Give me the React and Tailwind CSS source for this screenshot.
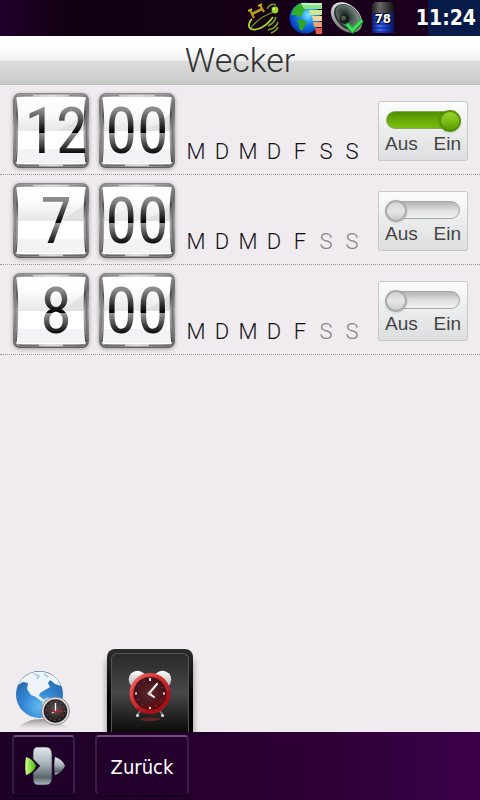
import { useState } from 'react';

const DAYS = ['M', 'D', 'M', 'D', 'F', 'S', 'S'];
const DAY_NAMES = ['Montag', 'Dienstag', 'Mittwoch', 'Donnerstag', 'Freitag', 'Samstag', 'Sonntag'];

const INITIAL_ALARMS = [
    { id: 1, hour: '12', minute: '00', days: [1, 1, 1, 1, 1, 1, 1], enabled: true },
    { id: 2, hour: '7', minute: '00', days: [1, 1, 1, 1, 1, 0, 0], enabled: false },
    { id: 3, hour: '8', minute: '00', days: [1, 1, 1, 1, 1, 0, 0], enabled: false },
];

function SatelliteIcon() {
    return (
        <svg viewBox="0 0 32 32" className="size-8" aria-hidden="true" fill="none">
            <g stroke="#b89a18" strokeWidth="2.2">
                <path d="M2 8 L6 16 M12 3 L16 10" />
                <path d="M4 12 L14 7" strokeWidth="2.6" />
                <path d="M0 9 L4 7 M10 4 L14 2" stroke="#e0c030" strokeWidth="1.6" />
            </g>
            <path d="M19 7 C21 3 24 1 28 3" stroke="#6f9d18" strokeWidth="1.4" />
            <path d="M4 17 C0 21 0 25 3 27 C9 29 18 25 25 15" stroke="#a8dc28" strokeWidth="1.8" />
            <path d="M3 26 C7 20 14 14 26 10" stroke="#6f9d18" strokeWidth="1.3" />
            <circle cx="27" cy="8" r="3.4" fill="#8fd820" />
            <circle cx="26" cy="7" r="1.3" fill="#d6ff70" />
            <path d="M28 15 C27 19 24 22 20 24 M30 20 C29 24 25 27 20 28 M30 25 C29 28 26 30 23 31" stroke="#7dad1c" strokeWidth="1.5" />
        </svg>
    );
}

function NetworkIcon() {
    return (
        <svg viewBox="0 0 34 32" className="h-8 w-[34px]" aria-hidden="true">
            <defs>
                <radialGradient id="net-sea" cx=".6" cy=".4" r=".65">
                    <stop offset="0" stopColor="#7ee8ff" />
                    <stop offset=".4" stopColor="#188df0" />
                    <stop offset="1" stopColor="#0630b0" />
                </radialGradient>
            </defs>
            <circle cx="17" cy="16" r="15.5" fill="url(#net-sea)" />
            <path d="M5 7 L11 1.5 L17 3 L18 7 L15 10 L14 14 L10 15 L8 13 L3 13 Z" fill="#35b02c" />
            <path d="M9 18 L14 17 L19 20 L17 24 L14 29 L11 27 L11 22 Z" fill="#2da32c" />
            <path d="M13 1 H34 V7 H16 Z" fill="#8be08a" />
            <path d="M13 1 H34 V3 H14 Z" fill="#c4f3bd" />
            <path d="M21 8 H34 V13 H22 Z" fill="#d0e88a" />
            <path d="M24 14 H34 V19 H25 Z" fill="#f3d49a" />
            <path d="M25 20 H34 V25 H26 Z" fill="#f0a070" />
            <path d="M27 26 H34 V32 H28 Z" fill="#e05a50" />
        </svg>
    );
}

function SpeakerIcon() {
    return (
        <svg viewBox="0 0 34 32" className="h-8 w-[34px]" aria-hidden="true">
            <defs>
                <linearGradient id="spk-rim" x1="0" y1="0" x2="1" y2="1">
                    <stop offset="0" stopColor="#fff" />
                    <stop offset=".5" stopColor="#aaa" />
                    <stop offset="1" stopColor="#5d5d5d" />
                </linearGradient>
                <radialGradient id="spk-cone" cx=".4" cy=".55" r=".65">
                    <stop offset="0" stopColor="#1b201e" />
                    <stop offset=".4" stopColor="#42524d" />
                    <stop offset="1" stopColor="#8d9b93" />
                </radialGradient>
            </defs>
            <ellipse cx="16.5" cy="15.5" rx="18" ry="12.5" transform="rotate(43 16.5 15.5)" fill="url(#spk-rim)" />
            <ellipse cx="17.5" cy="15" rx="15.5" ry="10.5" transform="rotate(43 17.5 15)" fill="#222a27" />
            <ellipse cx="18" cy="14.5" rx="14.5" ry="9.5" transform="rotate(43 18 14.5)" fill="url(#spk-cone)" />
            <circle cx="14.5" cy="17" r="5" fill="#18201d" />
            <circle cx="13.5" cy="16" r="2.4" fill="#4c5b55" />
            <path d="M17 22 L22.5 29 L32 18.5" fill="none" stroke="#0b8a20" strokeWidth="4.4" />
            <path d="M17 22 L22.5 28.5 L32 18" fill="none" stroke="#3ee25a" strokeWidth="3" />
        </svg>
    );
}

function BatteryIcon() {
    return (
        <span className="relative flex h-8 w-[22px] items-center justify-center">
            <svg viewBox="0 0 22 32" className="absolute inset-0 size-full" aria-hidden="true">
                <defs>
                    <linearGradient id="bat-body" x1="0" x2="1">
                        <stop offset="0" stopColor="#0a1a68" />
                        <stop offset=".35" stopColor="#3c6cf0" />
                        <stop offset=".6" stopColor="#1d46cc" />
                        <stop offset="1" stopColor="#081350" />
                    </linearGradient>
                    <linearGradient id="bat-cap" x1="0" x2="1">
                        <stop offset="0" stopColor="#222" />
                        <stop offset=".35" stopColor="#666" />
                        <stop offset="1" stopColor="#111" />
                    </linearGradient>
                </defs>
                <path d="M2 0 H20 V2 H22 V12 H0 V2 H2 Z" fill="url(#bat-cap)" />
                <rect x="0" y="11" width="22" height="20" rx="1" fill="url(#bat-body)" />
                <path d="M0 14 H22 M0 18 H22 M0 22 H22 M0 26 H22 M0 30 H22" stroke="#0a1d80" strokeWidth="1" />
            </svg>
            <span className="relative pt-0.5 text-[13px] leading-4 font-bold text-white [text-shadow:1px_1px_0_#000,-1px_-1px_0_#000]">78</span>
        </span>
    );
}

function StatusBar() {
    return (
        <header className="flex h-9 items-center justify-end bg-linear-to-r from-[#20002c] via-[#100010] via-15% to-[#1c0020] font-['DejaVu_Sans_Condensed','DejaVu_Sans',sans-serif]">
            <div className="flex items-center gap-2 pr-[30px]">
                <SatelliteIcon />
                <NetworkIcon />
                <SpeakerIcon />
                <BatteryIcon />
            </div>
            <div className="-ml-2 flex h-full items-center bg-linear-to-r from-transparent from-18% to-[#071b48] to-18% pr-1">
                <time className="text-[21px] leading-9 font-bold text-white">11:24</time>
            </div>
        </header>
    );
}

function FlipFrame() {
    return (
        <svg viewBox="0 0 76 75" className="absolute inset-0 size-full overflow-visible drop-shadow-[0_1px_2px_#00000055]" aria-hidden="true">
            <defs>
                <linearGradient id="flip-rim" x1="0" x2="1" y1="0" y2="0">
                    <stop offset="0" stopColor="#777" />
                    <stop offset=".15" stopColor="#bdbdbd" />
                    <stop offset=".5" stopColor="#dedede" />
                    <stop offset=".85" stopColor="#bdbdbd" />
                    <stop offset="1" stopColor="#666" />
                </linearGradient>
                <linearGradient id="flip-side" x1="0" x2="0" y1="0" y2="1">
                    <stop offset="0" stopColor="#999" />
                    <stop offset=".25" stopColor="#444" />
                    <stop offset=".5" stopColor="#aaa" />
                    <stop offset=".75" stopColor="#999" />
                    <stop offset="1" stopColor="#444" />
                </linearGradient>
                <linearGradient id="flip-edge" x1="0" x2="0" y1="0" y2="1">
                    <stop offset="0" stopColor="#8a8a8a" />
                    <stop offset=".2" stopColor="#6e6e6e" />
                    <stop offset=".5" stopColor="#ababab" />
                    <stop offset="1" stopColor="#5e5e5e" />
                </linearGradient>
                <linearGradient id="flip-top" x1="0" x2="0" y1="0" y2="1">
                    <stop offset="0" stopColor="#fff" />
                    <stop offset=".4" stopColor="#fcfcfc" />
                    <stop offset="1" stopColor="#e6e7e7" />
                </linearGradient>
            </defs>
            <rect x=".8" y=".8" width="74.4" height="73.4" rx="6" fill="url(#flip-rim)" stroke="url(#flip-edge)" strokeWidth="1.5" />
            <path d="M3 7 C3 4 4 4 6 4 H70 C73 4 73 4 73 7 C71 22 71 52 73 68 C73 71 72 71 70 71 H6 C4 71 3 71 3 68 C5 52 5 22 3 7 Z" fill="#fff" />
            <path d="M5 5 H71 C71 15 71 28 71 38 H5 C5 28 5 15 5 5 Z" fill="url(#flip-top)" />
            <path d="M44 38 C56 33 66 27 71 20 V38 Z" fill="#d9dada" opacity=".6" />
            <path d="M5 56 H71 V70 H5 Z" fill="#f3f2f5" />
            <path d="M3 6 C5 22 5 52 3 69" fill="none" stroke="url(#flip-side)" strokeWidth="1.4" />
            <path d="M73 6 C71 22 71 52 73 69" fill="none" stroke="url(#flip-side)" strokeWidth="1.8" />
            <path d="M6 72.5 H26 M50 72.5 H70" stroke="#6a6a6a" strokeWidth="1.6" />
            <path d="M6 2.5 H20 M56 2.5 H70" stroke="#8a8a8a" strokeWidth="1.4" />
        </svg>
    );
}

function FlipCard({ value, className = '' }) {
    return (
        <span className="relative block h-[75px] w-19">
            <FlipFrame />
            <span className={`relative block bg-[linear-gradient(#8a8a8a_22%,#000_51%,#999_51%,#000_79%)] bg-clip-text text-center font-['Roboto_Condensed','Roboto','Liberation_Sans',sans-serif] text-[64px] leading-[78px] text-transparent ${className}`}>
                {value}
            </span>
        </span>
    );
}

function Toggle({ id, checked, onChange }) {
    return (
        <label
            htmlFor={id}
            className="flex h-15 w-[90px] cursor-pointer flex-col rounded-xs border border-[#c6c8ca] bg-linear-to-b from-[#fbfcfc] to-[#dcdedf] px-1.5 pt-2"
        >
            <span className="relative block h-[22px]">
                <input
                    id={id}
                    type="checkbox"
                    role="switch"
                    checked={checked}
                    onChange={onChange}
                    aria-label="Wecker ein oder aus"
                    className="peer m-0 mx-px mt-px block h-[18px] w-[74px] appearance-none rounded-full border border-[#a5a7a7] bg-linear-to-b from-[#b4b4b4] via-[#dedede] to-[#f2f2f2] checked:border-[#88a65c] checked:from-[#4d9000] checked:via-[#69a908] checked:to-[#7abd0c]"
                />
                <span className="pointer-events-none absolute top-0 left-0 size-[22px] rounded-full border-2 border-[#a9abab] bg-linear-to-b from-[#d2d3d3] via-[#e6e6e6] to-[#c9cbcb] shadow-sm peer-checked:right-0 peer-checked:left-auto peer-checked:border-[#559008] peer-checked:from-[#9bd22d] peer-checked:via-[#7dbd14] peer-checked:to-[#539c00]" />
            </span>
            <span className="flex justify-between text-[19px] leading-6 text-[#444]">
                <span>Aus</span>
                <span>Ein</span>
            </span>
        </label>
    );
}

function AlarmRow({ alarm, onToggle, onToggleDay }) {
    return (
        <li className="flex h-[90px] items-start border-b border-dotted border-[#999] pt-2 pr-3 pl-[13px]">
            <button type="button" className="flex gap-[10px]" aria-label={`Weckzeit ${alarm.hour}:${alarm.minute}`}>
                <FlipCard value={alarm.hour} className="pl-2.5" />
                <FlipCard value={alarm.minute} />
            </button>
            <div className="ml-2 grid grid-cols-7 self-end pb-2 font-['Roboto','Liberation_Sans',sans-serif] text-[22px] leading-7">
                {DAYS.map((day, i) => (
                    <button
                        key={i}
                        type="button"
                        aria-label={DAY_NAMES[i]}
                        aria-pressed={Boolean(alarm.days[i])}
                        onClick={() => onToggleDay(i)}
                        className={`w-[26px] font-light ${alarm.days[i] ? 'text-[#111]' : 'text-[#888]'}`}
                    >
                        {day}
                    </button>
                ))}
            </div>
            <div className="ml-auto pt-2">
                <Toggle id={`alarm-${alarm.id}`} checked={alarm.enabled} onChange={onToggle} />
            </div>
        </li>
    );
}

function WorldClockIcon() {
    return (
        <svg viewBox="0 0 60 62" className="h-[62px] w-15" aria-hidden="true">
            <defs>
                <radialGradient id="globe" cx=".5" cy=".75" r=".7">
                    <stop offset="0" stopColor="#62baf4" />
                    <stop offset=".5" stopColor="#3486d2" />
                    <stop offset=".85" stopColor="#2a70b8" />
                    <stop offset="1" stopColor="#1c4674" />
                </radialGradient>
                <radialGradient id="small-dial" cx=".5" cy=".4" r=".6">
                    <stop offset="0" stopColor="#655558" />
                    <stop offset="1" stopColor="#191314" />
                </radialGradient>
                <linearGradient id="globe-fade" x1="0" x2="0" y1="0" y2="1">
                    <stop offset="0" stopColor="#777" stopOpacity=".8" />
                    <stop offset="1" stopColor="#aaa" stopOpacity="0" />
                </linearGradient>
            </defs>
            <path d="M6 59 C11 52 18 49 31 49 L54 56 L57 59 Z" fill="url(#globe-fade)" />
            <circle cx="27.5" cy="24.5" r="23.5" fill="url(#globe)" />
            <path d="M6 15 C12 4 21 1 29 1.5 C37 2 46 7 49 16 L43 14 L38 10 L36 13 L38 17 L33 20 L28 23 L27 26 L31 29 L34 32 L29 31 L24 27 L19 25 L15 19 L16 13 L11 12 L6 15 Z" fill="#eef4f7" />
            <path d="M22 4 L27 6 L25 9 M32 4 L36 7" stroke="#82bde4" strokeWidth="1.2" fill="none" />
            <path d="M30 30 L36 27 L43 32 L42 40 L33 45 L30 37 Z" fill="#c8dce8" opacity=".8" />
            <circle cx="43.5" cy="41" r="14" fill="#dcdcdc" stroke="#777" strokeWidth=".8" />
            <circle cx="43.5" cy="41" r="11.8" fill="url(#small-dial)" />
            <circle cx="43.5" cy="41" r="9.3" fill="none" stroke="#888" strokeWidth="1" strokeDasharray="1 3.87" />
            <path d="M43.5 42 V33 M43.5 41 L40 43" stroke="#fff" strokeWidth="1.3" />
            <path d="M40 41.5 H51" stroke="#c82020" strokeWidth="1.4" />
        </svg>
    );
}

function AlarmClockIcon() {
    return (
        <svg viewBox="0 0 44 54" className="h-[54px] w-11" aria-hidden="true">
            <defs>
                <linearGradient id="clk-rim" x1="0" x2="1" y1="0" y2="1">
                    <stop offset="0" stopColor="#f07874" />
                    <stop offset=".4" stopColor="#d83030" />
                    <stop offset="1" stopColor="#9c0d12" />
                </linearGradient>
                <linearGradient id="clk-bell" x1="0" x2="0" y1="0" y2="1">
                    <stop offset="0" stopColor="#fff" />
                    <stop offset="1" stopColor="#aaa" />
                </linearGradient>
                <radialGradient id="clk-face">
                    <stop offset="0" stopColor="#64262b" />
                    <stop offset="1" stopColor="#3a1116" />
                </radialGradient>
            </defs>
            <circle cx="9.5" cy="9.5" r="8.8" fill="url(#clk-bell)" />
            <circle cx="34.5" cy="9.5" r="8.8" fill="url(#clk-bell)" />
            <path d="M13 40 L9 45 M31 40 L35 45" stroke="#777" strokeWidth="2" />
            <circle cx="9.5" cy="45.5" r="1.6" fill="#ddd" />
            <circle cx="34.5" cy="45.5" r="1.6" fill="#ddd" />
            <circle cx="22" cy="23.500" r="20.5" fill="url(#clk-rim)" />
            <circle cx="22" cy="23.500" r="16.5" fill="url(#clk-face)" stroke="#8e1c20" strokeWidth="1" />
            <path d="M6 38 C21 36 34 28 42 19 C44 33 34 43 22 44 C15 44 10 42 6 38 Z" fill="#8f0408" opacity=".35" />
            <circle cx="22" cy="23.500" r="13.5" fill="none" stroke="#a58285" strokeWidth="1" strokeDasharray="1 6.07" />
            <path d="M22 8 V11 M22 37 V39 M7 23.500 H9 M35 23.500 H37" stroke="#ddd" strokeWidth="2" />
            <path d="M21 23.500 L29 14 M21 23.500 L26 27" stroke="#fff" strokeWidth="2" strokeLinecap="round" />
            <circle cx="21.5" cy="23.500" r="2" fill="#ccc" />
            <path d="M11 49 C17 47 27 47 33 49 C28 52 16 52 11 49 Z" fill="#b02828" opacity=".5" />
        </svg>
    );
}

function SwitchIcon() {
    return (
        <svg viewBox="0 0 42 40" className="h-10 w-[42px]" aria-hidden="true">
            <defs>
                <linearGradient id="sw-steel" x1="0" x2="0" y1="0" y2="1">
                    <stop offset="0" stopColor="#e2e8ea" />
                    <stop offset=".45" stopColor="#a5b3b8" />
                    <stop offset=".8" stopColor="#59666c" />
                    <stop offset="1" stopColor="#b0bdc0" />
                </linearGradient>
                <linearGradient id="sw-green" x1="0" x2="1">
                    <stop offset="0" stopColor="#d4ff8e" />
                    <stop offset="1" stopColor="#43b800" />
                </linearGradient>
            </defs>
            <path d="M14 1 H23 C27 1 29 4 29 9 V31 C29 36 27 39 23 39 H15 C11 39 10 36 10 31 V27 L17 20 L10 13 V9 C10 4 11 1 14 1 Z" fill="url(#sw-steel)" stroke="#33203a" strokeWidth=".7" />
            <path d="M3 11 C7 12 12 16 13 20 C12 24 7 28 3 29 C2 24 2 16 3 11 Z" fill="url(#sw-green)" />
            <path d="M32 11 C36 12 41 16 42 20 C40 24 36 28 32 29 C31 24 31 16 32 11 Z" fill="url(#sw-steel)" />
        </svg>
    );
}

export default function App() {
    const [alarms, setAlarms] = useState(INITIAL_ALARMS);

    const update = (id, fn) => {
        setAlarms(alarms.map((a) => (a.id === id ? { ...a, ...fn(a) } : a)));
    };

    return (
        <div className="flex min-h-screen flex-col bg-[#efebef] font-['Liberation_Sans',Arial,sans-serif]">
            <StatusBar />

            <h1 className="h-[49px] border-b border-[#bdbdbd] bg-[linear-gradient(#fff_20%,#efefef_52%,#dcdcdc_53%,#c9cbc9)] text-center font-['Roboto','Liberation_Sans',sans-serif] text-[34px] leading-12 font-light text-[#333]">
                Wecker
            </h1>

            <main className="flex-1">
                <ul>
                    {alarms.map((alarm) => (
                        <AlarmRow
                            key={alarm.id}
                            alarm={alarm}
                            onToggle={() => update(alarm.id, (a) => ({ enabled: !a.enabled }))}
                            onToggleDay={(i) =>
                                update(alarm.id, (a) => ({ days: a.days.map((d, n) => (n === i ? 1 - d : d)) }))
                            }
                        />
                    ))}
                </ul>
            </main>

            <nav className="flex items-end pl-3">
                <button type="button" aria-label="Weltzeit" className="w-[95px]">
                    <WorldClockIcon />
                </button>
                <button
                    type="button"
                    aria-label="Wecker"
                    aria-current="page"
                    className="flex h-[83px] w-[86px] justify-center rounded-t-lg bg-linear-to-b from-[#2a2c2c] to-black px-1 pt-1 shadow-[0_8px_6px_#00000070]"
                >
                    <span className="flex size-full justify-center rounded-t-md border-x border-t border-[#555] bg-linear-to-b from-[#2a2a2a] via-[#484848] via-50% to-[#0c0c0c] pt-4">
                        <AlarmClockIcon />
                    </span>
                </button>
            </nav>

            <footer className="relative flex h-17 items-start gap-5 bg-linear-to-r from-[#1d0028] via-[#29002f] to-[#3a0048] px-3 pt-[3px]">
                <button
                    type="button"
                    aria-label="Umschalten"
                    className="flex h-15 w-[63px] items-center justify-center rounded-sm border-2 border-[#3c1c48] border-t-[#6c5078] border-b-[#24002c] pt-0.5 shadow-[0_1px_2px_#000]"
                >
                    <SwitchIcon />
                </button>
                <button
                    type="button"
                    className="h-15 w-[94px] rounded-sm border-2 border-[#3c1c48] border-t-[#6c5078] border-b-[#24002c] pt-1 font-['DejaVu_Sans_Condensed','DejaVu_Sans',sans-serif] text-xl text-white shadow-[0_1px_2px_#000]"
                >
                    Zurück
                </button>
            </footer>
        </div>
    );
}
